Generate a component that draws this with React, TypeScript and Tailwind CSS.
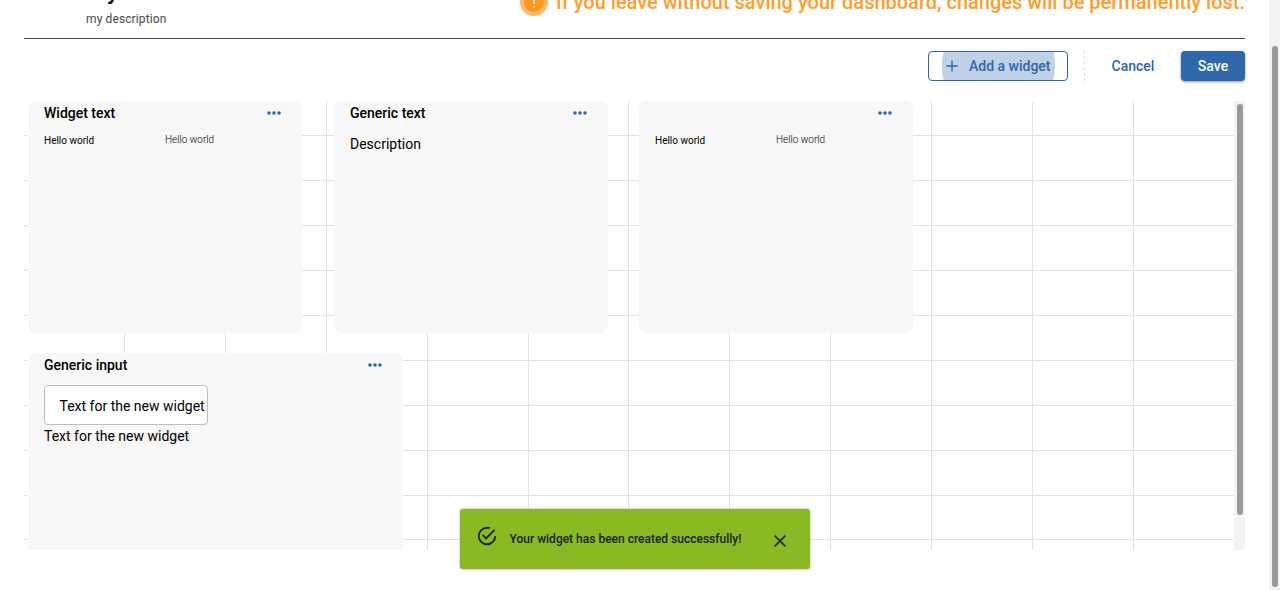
import type { ReactNode } from 'react';

const columnLines = [124, 225, 326, 427, 528, 628, 729, 830, 931, 1032, 1133];
const rowLines = [135, 180, 225, 270, 315, 360, 405, 450, 495, 539];

function GridLines() {
  return (
    <svg className="absolute inset-0" width="1210" height="449" viewBox="24 101 1210 449" fill="#e2e2e2" shapeRendering="crispEdges" aria-hidden="true">
      {columnLines.map((x) => (
        <rect key={x} x={x} y="101" width="1" height="449" />
      ))}
      {rowLines.map((y) => (
        <rect key={y} x="24" y={y} width="1210" height="1" />
      ))}
    </svg>
  );
}

function MoreIcon() {
  return (
    <svg width="14" height="4" viewBox="0 0 14 4" fill="#2e68aa" aria-hidden="true">
      <circle cx="2" cy="2" r="1.8" />
      <circle cx="7" cy="2" r="1.8" />
      <circle cx="12" cy="2" r="1.8" />
    </svg>
  );
}

function Widget({ title, className, children }: { title?: string; className: string; children: ReactNode }) {
  return (
    <section className={`shrink-0 bg-[#f7f7f7] px-4 ${className}`}>
      <header className="flex h-6 items-center justify-between pr-[5px]">
        <h2 className="text-[14px] leading-6 font-medium">{title}</h2>
        <button type="button" aria-label="More actions">
          <MoreIcon />
        </button>
      </header>
      {children}
    </section>
  );
}

function HelloTexts() {
  return (
    <div className="grid grid-cols-2 text-[10px] leading-3">
      <p className="pt-[10px]">Hello world</p>
      <p className="pt-[9px] font-light">Hello world</p>
    </div>
  );
}

function Toast() {
  return (
    <div role="status" className="absolute top-[509px] left-[460px] flex h-[60px] w-[350px] items-center rounded-[3px] bg-[#89b923] text-[#1b210f] shadow-[0_0_1px_1px_rgba(0,0,0,0.14)]">
      <svg className="-mt-[6px] ml-4 shrink-0" width="22" height="22" viewBox="0 0 24 24" fill="currentColor" aria-hidden="true">
        <path d="M20 12a8 8 0 1 1-8-8c.76 0 1.5.11 2.2.31l1.57-1.57A9.822 9.822 0 0 0 12 2a10 10 0 1 0 10 10M7.91 10.08 6.5 11.5 11 16 21 6l-1.41-1.42L11 13.17z" />
      </svg>
      <span className="ml-[11.5px] w-[260.5px] text-[12px] leading-4 font-medium whitespace-nowrap">Your widget has been created successfully!</span>
      <button type="button" aria-label="Close" className="mt-1">
        <svg className="ml-1" width="12" height="12" viewBox="0 0 12 12" fill="none" stroke="currentColor" strokeWidth="1.5" aria-hidden="true">
          <path d="M.6.6 11.4 11.4M11.4.6.6 11.4" />
        </svg>
      </button>
    </div>
  );
}

export default function App() {
  return (
    <div className="relative flex h-[590px] w-[1280px] overflow-hidden bg-white font-['Roboto',sans-serif] text-black">
      <main className="flex w-[1269px] flex-col pr-6 pl-6">
        <header className="flex h-[39px] w-[1221px] shrink-0 items-end justify-between border-b border-[#464646]">
          <div className="pb-[11px] pl-[62px]">
            <h1 className="mb-[6px] text-[24px] leading-7 font-medium">My dashboard</h1>
            <p className="text-[12px] leading-4 tracking-[0.12px] text-[#494949]">my description</p>
          </div>
          <div className="flex items-center gap-2 pb-[22px] text-[#ff9d2b]">
            <svg width="28" height="28" viewBox="0 0 28 28" aria-hidden="true">
              <circle cx="14" cy="14" r="14" fill="#ffb868" />
              <circle cx="14" cy="14" r="10" fill="#ff9823" />
              <path d="M14 8.5v7.5M14 18v1.8" stroke="#fff" strokeWidth="1.2" />
            </svg>
            <p className="text-[20px] leading-7 font-medium whitespace-nowrap">If you leave without saving your dashboard, changes will be permanently lost.</p>
          </div>
        </header>

        <div className="mt-3 flex h-[30px] w-[1221px] shrink-0 items-center justify-end text-[14px] font-medium text-[#2e68aa]">
          <button type="button" className="relative flex h-[30px] w-[140px] justify-center overflow-hidden rounded-[4px] border border-[#2e68aa]">
            <span className="absolute -top-[43px] left-[13px] h-[114px] w-[113px] rounded-full bg-[#c0d0e6]" />
            <span className="relative flex h-7 items-center justify-center gap-[11px] pl-[0.5px]">
              <svg width="12" height="12" viewBox="0 0 12 12" fill="none" stroke="currentColor" strokeWidth="1.4" aria-hidden="true">
                <path d="M6 .5v11M.5 6h11" />
              </svg>
              Add a widget
            </span>
          </button>
          <span className="ml-4 h-[30px] border-l border-dashed border-[#dedede]" />
          <button type="button" className="w-24">Cancel</button>
          <button type="button" className="h-[30px] w-16 rounded-[4px] bg-[#2e68aa] text-white shadow-[0_1px_3px_rgba(0,0,0,0.4)]">Save</button>
        </div>

        <div className="mt-5 flex h-[449px] w-[1221px] shrink-0 overflow-hidden">
          <div className="relative w-[1210px]">
            <GridLines />
            <div className="relative flex flex-col gap-5 pl-1">
              <div className="flex">
                <Widget title="Widget text" className="h-[232px] w-[274px] rounded-lg">
                  <HelloTexts />
                </Widget>
                <Widget title="Generic text" className="ml-8 h-[232px] w-[274px] rounded-lg">
                  <p className="pt-[9px] text-[14px] leading-5">Description</p>
                </Widget>
                <Widget className="ml-[31px] h-[232px] w-[274px] rounded-lg">
                  <HelloTexts />
                </Widget>
              </div>
              <Widget title="Generic input" className="h-[197px] w-[375px] rounded-t-lg">
                <div className="mt-2 flex h-10 w-[164px] items-center rounded-[4px] border border-[#bdbdbd] bg-white pt-[3px] pl-[14.5px] text-[14px] whitespace-nowrap">
                  Text for the new widget
                </div>
                <p className="mt-px text-[14px] leading-5">Text for the new widget</p>
              </Widget>
            </div>
          </div>
          <div className="flex w-[11px] justify-center bg-[#f3f3f3] pt-[3px]">
            <span className="h-[411px] w-[6px] rounded-full bg-[#999]" />
          </div>
        </div>
      </main>
      <div className="flex h-full w-[11px] bg-[#f3f3f3] pt-[46px] pl-[3px]">
        <span className="h-[541px] w-[6px] rounded-full bg-[#999]" />
      </div>
      <Toast />
    </div>
  );
}
